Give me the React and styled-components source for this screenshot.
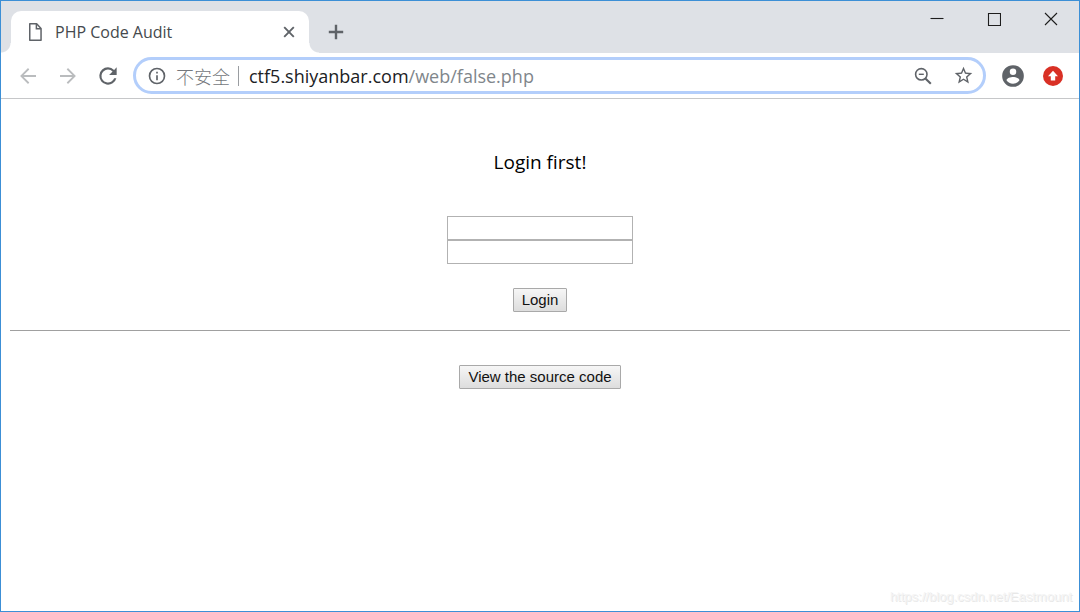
import React from "react";
import styled, { createGlobalStyle } from "styled-components";

const GlobalStyle = createGlobalStyle`
  *, *::before, *::after { box-sizing: border-box; }
  body {
    margin: 0;
    background: #fff;
    font-family: "Open Sans", "Noto Sans CJK SC", sans-serif;
  }
  button, input { font: inherit; }
`;

const BrowserWindow = styled.div`
  display: flex;
  flex-direction: column;
  min-height: 100vh;
  border: 1px solid #3c8fd6;
  background: #fff;
`;

const TabStrip = styled.header`
  display: flex;
  align-items: flex-start;
  height: 52px;
  padding-left: 10px;
  background: #dee1e6;
`;

const Tab = styled.div`
  position: relative;
  display: flex;
  align-items: center;
  align-self: flex-end;
  width: 298px;
  height: 42px;
  padding: 0 11px 0 15px;
  border-radius: 10px 10px 0 0;
  background: #fff;
  color: #5f6368;

  &::before,
  &::after {
    content: "";
    position: absolute;
    bottom: 0;
    width: 10px;
    height: 10px;
  }
  &::before {
    right: 100%;
    background: radial-gradient(circle at 0 0, transparent 9px, #fff 10px);
  }
  &::after {
    left: 100%;
    background: radial-gradient(circle at 100% 0, transparent 9px, #fff 10px);
  }
`;

const TabTitle = styled.span`
  flex: 1;
  margin-left: 10px;
  font-size: 16px;
  line-height: 24px;
  color: #45494d;
`;

const IconButton = styled.button`
  display: flex;
  align-items: center;
  justify-content: center;
  flex: none;
  width: ${(p) => p.$width || 40}px;
  height: ${(p) => p.$height || 36}px;
  padding: 0;
  border: 0;
  background: none;
  color: ${(p) => p.$color || "#5f6368"};
`;

const WindowControls = styled.div`
  display: flex;
  margin-left: auto;
`;

const Toolbar = styled.nav`
  display: flex;
  align-items: center;
  height: 46px;
  padding: 0 6px 0 7px;
  border-bottom: 1px solid #c6c7c9;
`;

const AddressBar = styled.div`
  display: flex;
  align-items: center;
  flex: 1;
  min-width: 0;
  height: 37px;
  margin: 0 7px 0 5px;
  padding-left: 11px;
  border: 3px solid #b3cefb;
  border-radius: 19px;
  color: #5f6368;
`;

const Security = styled.span`
  height: 20px;
  margin-left: 9px;
  padding-right: 8px;
  border-right: 1px solid #9a9da1;
  color: #74777c;
  font-family: "Noto Sans CJK SC", sans-serif;
  font-size: 18px;
  font-weight: 300;
  line-height: 20px;
  white-space: nowrap;
`;

const Url = styled.a`
  flex: 1;
  margin-left: 10px;
  color: #80868b;
  font-size: 18px;
  line-height: 24px;
  text-decoration: none;
  white-space: nowrap;
`;

const Host = styled.span`
  color: #202124;
`;

const Page = styled.main`
  display: flex;
  flex-direction: column;
  flex: 1;
  align-items: center;
  padding: 49px 9px 4px;
`;

const Message = styled.p`
  margin: 0 0 40px;
  color: #000;
  font-size: 19px;
  line-height: 28px;
`;

const LoginForm = styled.form`
  display: flex;
  flex-direction: column;
  align-items: center;
`;

const TextField = styled.input`
  width: 186px;
  height: 24px;
  padding: 1px 2px;
  border: 1px solid #b2b2b2;
  border-radius: 0;
  background: #fff;
`;

const PushButton = styled.button`
  height: 24px;
  padding: 0 8px;
  border: 1px solid #a9a9a9;
  border-radius: 1px;
  background: linear-gradient(#f6f6f6, #dddddd);
  color: #111;
  font-family: "Liberation Sans", Arial, sans-serif;
  font-size: 15px;
  line-height: 20px;
`;

const SubmitButton = styled(PushButton)`
  margin-top: 24px;
`;

const Divider = styled.hr`
  width: 100%;
  height: 1px;
  margin: 18px 0 34px;
  border: 0;
  background: #a0a0a0;
`;

const Watermark = styled.footer`
  align-self: flex-end;
  margin-top: auto;
  margin-right: -2px;
  color: #f4f4f4;
  font-family: "Liberation Sans", Arial, sans-serif;
  font-size: 13px;
  line-height: 20px;
  text-shadow: 1px 1px 0 #e8e8e8;
`;

const Glyph = ({ size = 24, box = 24, children }) => (
  <svg
    width={size}
    height={size}
    viewBox={`0 0 ${box} ${box}`}
    fill="currentColor"
    aria-hidden="true"
  >
    {children}
  </svg>
);

const PageIcon = () => (
  <svg width="19" height="20" viewBox="0 0 19 20" fill="none" stroke="currentColor" strokeWidth="1.5" aria-hidden="true">
    <path d="M3.75 1.75h6.9l4.4 4.7v11.8H3.75z" strokeLinejoin="round" />
    <path d="M10.4 2v4.8H15" />
  </svg>
);

const CloseTabIcon = () => (
  <svg width="12" height="12" viewBox="0 0 12 12" stroke="currentColor" strokeWidth="1.9" aria-hidden="true">
    <path d="M1.2 1.2l9.6 9.6M10.8 1.2L1.2 10.8" />
  </svg>
);

const NewTabIcon = () => (
  <svg width="16" height="16" viewBox="0 0 16 16" stroke="currentColor" strokeWidth="2.4" aria-hidden="true">
    <path d="M8 .8v14.4M.8 8h14.4" />
  </svg>
);

const ControlIcon = ({ d }) => (
  <svg width="14" height="14" viewBox="0 0 14 14" fill="none" stroke="#1d1d1d" strokeWidth="1.1" aria-hidden="true">
    <path d={d} />
  </svg>
);

export default function App() {
  return (
    <>
      <GlobalStyle />
      <BrowserWindow>
        <TabStrip>
          <Tab>
            <PageIcon />
            <TabTitle>PHP Code Audit</TabTitle>
            <IconButton $width={18} $height={24} aria-label="Close tab">
              <CloseTabIcon />
            </IconButton>
          </Tab>
          <IconButton $width={54} $height={62} aria-label="New tab">
            <NewTabIcon />
          </IconButton>
          <WindowControls>
            <IconButton $width={57} aria-label="Minimize">
              <ControlIcon d="M.5 6.5h13" />
            </IconButton>
            <IconButton $width={57} aria-label="Maximize">
              <ControlIcon d="M1.5 1.5h12v12h-12z" />
            </IconButton>
            <IconButton $width={57} aria-label="Close">
              <ControlIcon d="M1 1l12 12M13 1L1 13" />
            </IconButton>
          </WindowControls>
        </TabStrip>

        <Toolbar>
          <IconButton $color="#babcbe" aria-label="Back">
            <Glyph>
              <path d="M20 11.1H7.7l5.6-5.7L12 4.1 4.1 12l7.9 7.9 1.3-1.3-5.6-5.7H20z" />
            </Glyph>
          </IconButton>
          <IconButton $color="#babcbe" aria-label="Forward">
            <Glyph>
              <path d="M4 11.1h12.3l-5.6-5.7L12 4.1l7.9 7.9-7.9 7.9-1.3-1.3 5.6-5.7H4z" />
            </Glyph>
          </IconButton>
          <IconButton aria-label="Reload">
            <Glyph size={26}>
              <path d="M17.65 6.35A7.96 7.96 0 0 0 12 4a8 8 0 1 0 7.73 10h-2.08A6 6 0 1 1 12 6c1.66 0 3.14.69 4.22 1.78L13 11h7V4z" />
            </Glyph>
          </IconButton>
          <AddressBar>
            <Glyph size={20}>
              <path d="M11 17h2v-6h-2zm0-8h2V7h-2zm1-7a10 10 0 1 0 0 20 10 10 0 0 0 0-20zm0 18a8 8 0 1 1 0-16 8 8 0 0 1 0 16z" />
            </Glyph>
            <Security>不安全</Security>
            <Url href="#">
              <Host>ctf5.shiyanbar.com</Host>/web/false.php
            </Url>
            <IconButton aria-label="Zoom out">
              <svg width="18" height="18" viewBox="0 0 18 18" fill="none" stroke="currentColor" strokeWidth="1.6" aria-hidden="true">
                <circle cx="7.3" cy="7.3" r="5.7" />
                <path d="M11.4 11.4l5.4 5.4" strokeWidth="2.1" />
                <path d="M4.8 7.3h5" strokeWidth="1.4" />
              </svg>
            </IconButton>
            <IconButton aria-label="Bookmark this page">
              <Glyph size={21}>
                <path d="M22 9.24l-7.19-.62L12 2 9.19 8.63 2 9.24l5.46 4.73L5.82 21 12 17.27 18.18 21l-1.63-7.03zM12 15.4l-3.76 2.27 1-4.28-3.32-2.88 4.38-.38L12 6.1l1.71 4.04 4.38.38-3.32 2.88 1 4.28z" />
              </Glyph>
            </IconButton>
          </AddressBar>
          <IconButton aria-label="Profile">
            <Glyph size={26}>
              <path d="M12 2a10 10 0 1 0 0 20 10 10 0 0 0 0-20zm0 3a3 3 0 1 1 0 6 3 3 0 0 1 0-6zm0 14.2a7.2 7.2 0 0 1-6-3.22c.03-1.99 4-3.08 6-3.08s5.97 1.09 6 3.08a7.2 7.2 0 0 1-6 3.22z" />
            </Glyph>
          </IconButton>
          <IconButton $color="#d93025" aria-label="Update browser">
            <Glyph size={20} box={20}>
              <circle cx="10" cy="10" r="10" />
              <path d="M10 4.8l-5 5.4h2.8v4.4h4.4v-4.4H15z" fill="#fff" />
            </Glyph>
          </IconButton>
        </Toolbar>

        <Page>
          <Message>Login first!</Message>
          <LoginForm onSubmit={(e) => e.preventDefault()}>
            <TextField type="text" name="name" aria-label="Name" />
            <TextField type="password" name="password" aria-label="Password" />
            <SubmitButton type="submit">Login</SubmitButton>
          </LoginForm>
          <Divider />
          <PushButton type="button">View the source code</PushButton>
          <Watermark>https://blog.csdn.net/Eastmount</Watermark>
        </Page>
      </BrowserWindow>
    </>
  );
}
